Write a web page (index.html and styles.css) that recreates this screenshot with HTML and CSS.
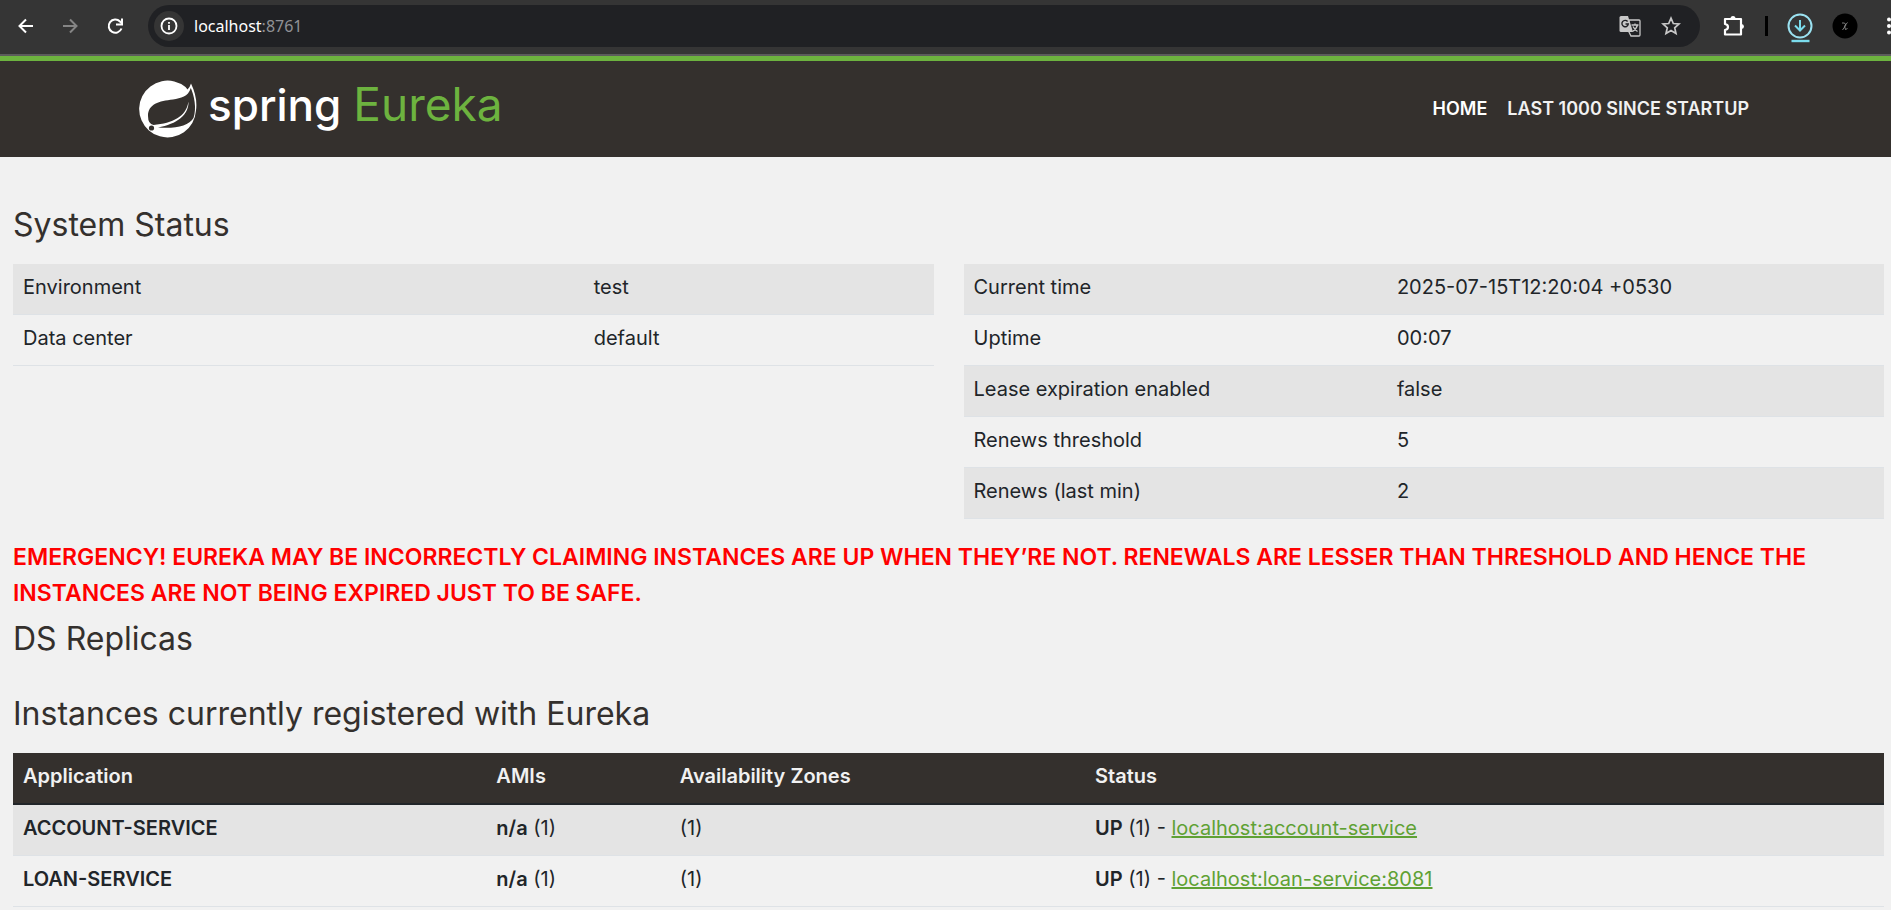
FILE: index.html
```html
<!DOCTYPE html>
<html lang="en">
<head>
<meta charset="utf-8">
<title>Eureka</title>
<link rel="stylesheet" href="styles.css">
</head>
<body>
<div class="toolbar">
  <div class="nav-buttons">
    <button class="icon-btn" aria-label="Back"><svg width="20" height="20" viewBox="0 0 20 20"><path d="M17 10H3.500M10 3.500 3.500 10l6.500 6.500" fill="none" stroke="#fff" stroke-width="2"/></svg></button>
    <button class="icon-btn" aria-label="Forward"><svg width="20" height="20" viewBox="0 0 20 20"><path d="M2 10h13.500M9 3.500l6.500 6.500-6.500 6.500" fill="none" stroke="#858585" stroke-width="2"/></svg></button>
    <button class="icon-btn" aria-label="Reload"><svg width="20" height="20" viewBox="0 0 20 20"><path d="M15.500 12.500A6.600 6.600 0 1 1 14 5.500L16 7.500" fill="none" stroke="#fff" stroke-width="2"/><path d="M16 2.500v6h-6" fill="none" stroke="#fff" stroke-width="2"/></svg></button>
  </div>
  <div class="address">
    <button class="site-info" aria-label="Site information"><svg width="18" height="18" viewBox="0 0 18 18"><circle cx="9" cy="9" r="7.500" fill="none" stroke="#fff" stroke-width="1.800"/><path d="M9 8v5M9 5v1.800" stroke="#fff" stroke-width="1.800"/></svg></button>
    <span class="url">localhost<span class="port">:8761</span></span>
    <div class="address-actions">
      <button class="icon-btn" aria-label="Translate"><svg width="22" height="22" viewBox="0 0 22 22"><path d="M10 5h10q1 0 1 1v14q0 1-1 1h-8l-2-4z" fill="#202124" stroke="#c7c7c7" stroke-width="1.300"/><path d="M2 1h7l5 16H2q-1.500 0-1.500-1.500v-13Q.500 1 2 1z" fill="#c7c7c7"/><path d="M8.600 6.500A3.200 3.200 0 1 0 9.300 9H6.500" fill="none" stroke="#202124" stroke-width="1.400"/><path d="M12.500 10h7M16 8.500V10M18.500 10q-1 4-5 6.500M14 11.500q1.500 3 4.500 5" fill="none" stroke="#c7c7c7" stroke-width="1.300"/></svg></button>
      <button class="icon-btn" aria-label="Bookmark"><svg width="20" height="20" viewBox="0 0 20 20"><path d="M10 2.200l2.300 5.300 5.700.500-4.300 3.800 1.300 5.700-5-3-5 3 1.300-5.700L2 8l5.700-.500z" fill="none" stroke="#c7c7c7" stroke-width="1.700"/></svg></button>
    </div>
  </div>
  <div class="extras">
    <button class="icon-btn" aria-label="Extensions"><svg width="22" height="22" viewBox="0 0 22 22"><path d="M2 4h16v15.500H2V15q3-.500 3-3T2 9z" fill="none" stroke="#fff" stroke-width="2.200" stroke-linejoin="round"/><path d="M7.500 3.500a2.500 2.500 0 0 1 5 0zM18.500 9a2.500 2.500 0 0 1 0 5z" fill="#fff"/></svg></button>
    <span class="divider"></span>
    <button class="icon-btn download" aria-label="Downloads"><svg width="26" height="30" viewBox="0 0 26 30"><circle cx="13" cy="13" r="11.500" fill="none" stroke="#9be2f1" stroke-width="2"/><path d="M13 7v10M8 12.500l5 5 5-5" fill="none" stroke="#7bdcec" stroke-width="2"/><path d="M4.500 28h18" stroke="#7bdcec" stroke-width="2.400"/></svg></button>
    <button class="icon-btn" aria-label="Profile"><svg width="26" height="26" viewBox="0 0 26 26"><circle cx="13" cy="13" r="12.500" fill="#000"/><path d="M10 10q3-1 4 2l-3.500 5M15.500 9.500l-3 3.500 1 3.500 2-1" fill="none" stroke="#999" stroke-width=".800"/></svg></button>
    <button class="icon-btn menu" aria-label="Menu"><svg width="20" height="20" viewBox="0 0 20 20"><circle cx="4" cy="3.500" r="2" fill="#fff"/><circle cx="4" cy="10" r="2" fill="#fff"/><circle cx="4" cy="16.500" r="2" fill="#fff"/></svg></button>
  </div>
</div>

<header class="navbar">
  <a class="brand" href="#" aria-label="spring Eureka">
    <svg class="leaf" width="58" height="58" viewBox="0 0 58 58"><path d="M46.500 7A28.400 28.400 0 1 0 56.900 31Q59 18 52 3.500 51 7 48.500 9.500z" fill="#fff"/><path d="M51.800 8C49 17 42 18 34 19.500 20 21 9 24 9 36q0 8 5.500 9C34 43 47 37 49.500 21.500 50 35 38 44 19 47.500 36 49 50 46 54.500 38 58 28 55 15 51.800 8z" fill="#34302d"/><circle cx="12.500" cy="48" r="2.600" fill="#34302d"/></svg>
    <span class="words"><span class="word-spring">spring</span><span class="word-eureka">Eureka</span></span>
  </a>
  <nav class="links">
    <a class="active" href="#">HOME</a>
    <a href="#">LAST 1000 SINCE STARTUP</a>
  </nav>
</header>

<main class="page">
  <h1>System Status</h1>
  <div class="status">
    <table class="left">
      <tr><td>Environment</td><td>test</td></tr>
      <tr><td>Data center</td><td>default</td></tr>
    </table>
    <table class="right">
      <tr><td>Current time</td><td>2025-07-15T12:20:04 +0530</td></tr>
      <tr><td>Uptime</td><td>00:07</td></tr>
      <tr><td>Lease expiration enabled</td><td>false</td></tr>
      <tr><td>Renews threshold</td><td>5</td></tr>
      <tr><td>Renews (last min)</td><td>2</td></tr>
    </table>
  </div>
  <p class="emergency">EMERGENCY! EUREKA MAY BE INCORRECTLY CLAIMING INSTANCES ARE UP WHEN THEY’RE NOT. RENEWALS ARE LESSER THAN THRESHOLD AND HENCE THE INSTANCES ARE NOT BEING EXPIRED JUST TO BE SAFE.</p>
  <h1 class="replicas">DS Replicas</h1>
  <h1>Instances currently registered with Eureka</h1>
  <table class="instances">
    <thead><tr><th>Application</th><th>AMIs</th><th>Availability Zones</th><th>Status</th></tr></thead>
    <tbody>
      <tr><td><b>ACCOUNT-SERVICE</b></td><td><b>n/a</b> (1)</td><td>(1)</td><td><b>UP</b> (1) - <a href="#">localhost:account-service</a></td></tr>
      <tr><td><b>LOAN-SERVICE</b></td><td><b>n/a</b> (1)</td><td>(1)</td><td><b>UP</b> (1) - <a href="#">localhost:loan-service:8081</a></td></tr>
    </tbody>
  </table>
</main>
</body>
</html>
```
FILE: styles.css
```css
* { box-sizing: border-box; }
html { overflow: hidden; }
body {
  margin: 0;
  background: #f1f1f1;
  color: #212529;
  font: 20px/30px Inter, sans-serif;
}
button { border: 0; padding: 0; background: none; }
svg { display: block; }

.toolbar {
  display: flex;
  align-items: center;
  height: 56px;
  padding: 0 0 2px 16px;
  background: #353535;
  border-bottom: 2px solid #5c5c5c;
}
.nav-buttons { display: flex; gap: 25px; width: 132px; }
.address {
  display: flex;
  flex: 1;
  align-items: center;
  height: 42px;
  padding: 0 19px 0 6px;
  border-radius: 21px;
  background: #202124;
}
.site-info {
  display: grid;
  place-items: center;
  width: 30px;
  height: 30px;
  border-radius: 50%;
  background: #353535;
}
.url {
  flex: 1;
  padding-left: 10px;
  color: #fff;
  font: 16px/24px "Noto Sans", sans-serif;
}
.port { color: #909195; }
.address-actions { display: flex; align-items: center; gap: 20px; }
.extras { display: flex; align-items: center; margin-right: -14px; }
.extras .icon-btn { margin-left: 19px; }
.extras .icon-btn:first-child { margin-left: 23px; }
.extras .menu { margin-left: 27px; }
.extras .download { padding-top: 3px; }
.divider { width: 3px; height: 20px; margin-left: 20px; background: #000; }

.navbar {
  display: flex;
  align-items: center;
  justify-content: space-between;
  height: 101px;
  padding: 0 142px 0 139px;
  border-top: 5px solid #6db33f;
  background: #34302d;
}
.brand {
  display: flex;
  align-items: center;
  text-decoration: none;
  line-height: 56px;
}
.words { padding-left: 11px; }
.word-spring { color: #fff; font-size: 44px; font-weight: 500; }
.word-eureka { margin-left: 12px; color: #6db33f; font-size: 46px; }
.links { display: flex; gap: 20px; font-size: 18px; font-weight: 600; }
.links a { color: #f1f1f1; text-decoration: none; }
.links .active { color: #fff; }

.page { padding: 48px 7px 0 13px; }
h1 {
  margin: 0;
  padding-bottom: 19px;
  color: #34302d;
  font-size: 32px;
  line-height: 40px;
  font-weight: 400;
}
.replicas { padding-bottom: 35px; }

table { width: 100%; border-collapse: separate; border-spacing: 0; }
td, th { height: 51px; padding: 8px 10px 12px; text-align: left; border-bottom: 1px solid #dee2e6; }
tr:nth-child(odd) td { background: #e4e4e4; }
b, th { font-weight: 600; }
.status { display: grid; grid-template-columns: 1fr 1fr; gap: 30px; align-items: start; }
.left td:first-child { width: 62%; }
.right td:first-child { width: 46%; }
.emergency {
  margin: 20px 0 8px;
  color: #f00;
  font-size: 23px;
  line-height: 36px;
  font-weight: 600;
}
.instances th { height: 52px; background: #34302d; color: #f1f1f1; border-bottom: 2px solid #212529; }
.instances th:nth-child(1) { width: 25.3%; }
.instances th:nth-child(2) { width: 9.8%; }
.instances th:nth-child(3) { width: 22.2%; }
.instances a { color: #5fa134; text-decoration-thickness: 2px; }
```
